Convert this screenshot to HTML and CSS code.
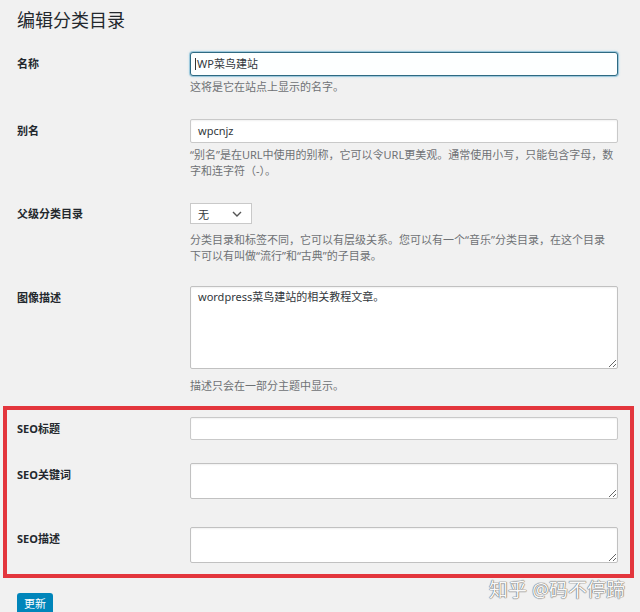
FILE: index.html
```
<!DOCTYPE html>
<html lang="zh-CN">
<head>
<meta charset="utf-8">
<title>编辑分类目录</title>
<link rel="stylesheet" href="styles.css">
</head>
<body>
<div class="wrap">
  <h1 class="title">编辑分类目录</h1>

  <div class="row row-name">
    <div class="label">名称</div>
    <div class="field">
      <div class="input focused"><span class="caret"></span>WP菜鸟建站</div>
      <p class="help">这将是它在站点上显示的名字。</p>
    </div>
  </div>

  <div class="row row-slug">
    <div class="label">别名</div>
    <div class="field">
      <div class="input">wpcnjz</div>
      <p class="help">“别名”是在URL中使用的别称，它可以令URL更美观。通常使用小写，只能包含字母，数字和连字符（-）。</p>
    </div>
  </div>

  <div class="row row-parent">
    <div class="label">父级分类目录</div>
    <div class="field">
      <div class="select"><span>无</span><svg class="chev" width="10" height="6" viewBox="0 0 10 6"><path d="M1 1l4 4 4-4" fill="none" stroke="#555" stroke-width="1.4"/></svg></div>
      <p class="help help-select">分类目录和标签不同，它可以有层级关系。您可以有一个“音乐”分类目录，在这个目录<br>下可以有叫做“流行”和“古典”的子目录。</p>
    </div>
  </div>

  <div class="row row-desc">
    <div class="label">图像描述</div>
    <div class="field">
      <textarea class="area area-big" readonly>wordpress菜鸟建站的相关教程文章。</textarea>
      <p class="help help-desc">描述只会在一部分主题中显示。</p>
    </div>
  </div>

  <div class="seo">
    <div class="row seo-title">
      <div class="label">SEO标题</div>
      <div class="field"><div class="input input-seo"></div></div>
    </div>
    <div class="row seo-kw">
      <div class="label">SEO关键词</div>
      <div class="field"><textarea class="area area-small" readonly></textarea></div>
    </div>
    <div class="row seo-desc">
      <div class="label">SEO描述</div>
      <div class="field"><textarea class="area area-small" readonly></textarea></div>
    </div>
  </div>

  <div class="actions"><span class="button">更新</span></div>

  <div class="watermark">知乎 @码不停蹄</div>
</div>
</body>
</html>
```
FILE: styles.css
```
html, body {
  margin: 0;
  padding: 0;
  background: #f1f1f1;
}
body {
  font-family: "Noto Sans", "Noto Sans CJK SC", sans-serif;
  font-size: 11px;
  color: #23282d;
}
.wrap {
  position: relative;
  padding: 0 22px 0 17px;
  height: 612px;
  box-sizing: border-box;
}
.title {
  margin: 9px 0 0;
  font-size: 18px;
  line-height: 23px;
  font-weight: 400;
  color: #23282d;
}
.row {
  display: grid;
  grid-template-columns: 173px 428px;
}
.label {
  font-weight: 700;
  font-size: 11px;
  line-height: 24px;
  color: #23282d;
}
.row-name { margin-top: 20px; }
.row-slug { margin-top: 24px; }
.row-parent { margin-top: 24px; }
.row-parent .label { line-height: 22px; }
.row-desc { margin-top: 22px; }

.input {
  box-sizing: border-box;
  height: 24px;
  border: 1px solid #c9c9c9;
  border-radius: 2px;
  background: #fff;
  box-shadow: inset 0 1px 2px rgba(0,0,0,.06);
  padding: 0 7px;
  line-height: 22px;
  font-size: 11px;
  color: #32373c;
}
.input.focused {
  border-color: #2e6a82;
  border-width: 1px;
  border-radius: 3px;
  box-shadow: 0 0 0 1px rgba(70,150,190,.35), 0 0 3px rgba(120,200,230,.8);
  background: #fdffff;
  padding-left: 4px;
}
.caret {
  display: inline-block;
  width: 1px;
  height: 12px;
  background: #333;
  vertical-align: -2px;
  margin-right: 1px;
}
.input-seo { height: 23px; }
.help {
  margin: 4px 0 0;
  font-size: 11px;
  line-height: 16px;
  color: #6f7275;
}
.row-name .help { margin-top: 3px; }
.help-select { margin-top: 8px; }
.help-desc { margin-top: 9px; }

.select {
  box-sizing: border-box;
  width: 62px;
  height: 21px;
  border: 1px solid #c9c9c9;
  background: #fff;
  display: flex;
  align-items: center;
  justify-content: space-between;
  padding: 0 9px 0 7px;
  font-size: 11px;
  color: #32373c;
}
.chev { display: block; }

.area {
  display: block;
  box-sizing: border-box;
  width: 428px;
  margin: 0;
  border: 1px solid #c1c1c1;
  border-radius: 2px;
  background: #fff;
  box-shadow: inset 0 1px 2px rgba(0,0,0,.06);
  padding: 2px 7px;
  font-family: "Noto Sans", "Noto Sans CJK SC", sans-serif;
  font-size: 11px;
  line-height: 16px;
  color: #32373c;
  resize: vertical;
  outline: none;
}
.area-big { height: 83px; }
.area-small { height: 36px; }

.seo {
  margin: 12px -16px 0 -14px;
  border: 4px solid #e3363d;
  padding: 7px 12px 11px 10px;
}
.seo-kw { margin-top: 22px; }
.seo-desc { margin-top: 28px; }

.actions { margin-top: 15px; }
.button {
  display: inline-block;
  height: 22px;
  line-height: 22px;
  padding: 0 7px;
  background: #0085ba;
  border-radius: 3px 3px 0 0;
  box-shadow: inset 0 -1px 0 #006799;
  color: #fff;
  font-size: 11px;
}
.watermark {
  position: absolute;
  right: 15px;
  top: 569px;
  font-size: 19px;
  line-height: 24px;
  color: #f8f8f8;
  text-shadow: 0 0 1px #6a6a6a, 0 0 1px #6a6a6a, 0 0 1px #888;
  white-space: nowrap;
}
```
